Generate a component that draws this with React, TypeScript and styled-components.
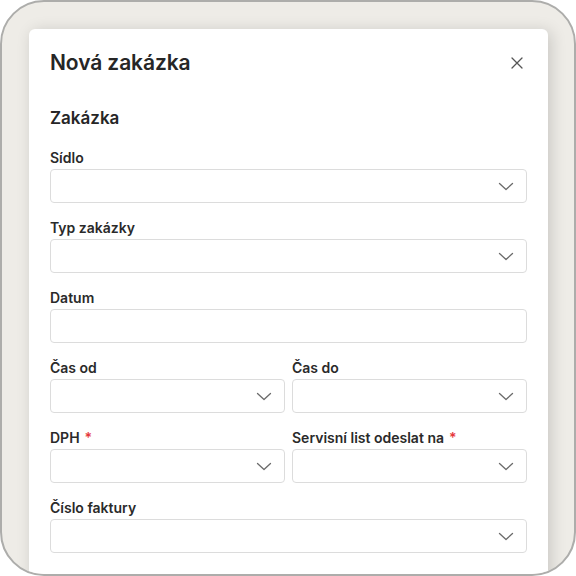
import styled, { createGlobalStyle } from 'styled-components';

const GlobalStyle = createGlobalStyle`
  html, body {
    margin: 0;
    padding: 0;
    background: #ffffff;
  }
  * {
    box-sizing: border-box;
  }
`;

const Frame = styled.div`
  width: 576px;
  height: 576px;
  border: 2px solid #adadab;
  border-radius: 44px;
  background: #eeece7;
  padding: 27px 26px 0 27px;
  overflow: hidden;
  font-family: Inter, 'Noto Sans', sans-serif;
  color: #262626;
`;

const Modal = styled.div`
  background: #ffffff;
  border-radius: 6px 6px 0 0;
  height: 600px;
  padding: 0 21px;
  box-shadow: 3px 2px 16px rgba(0, 0, 0, 0.16);
`;

const Header = styled.div`
  display: flex;
  align-items: center;
  justify-content: space-between;
  padding-top: 18px;
`;

const Title = styled.h1`
  margin: 0;
  font-size: 21px;
  line-height: 32px;
  font-weight: 600;
  letter-spacing: -0.1px;
`;

const CloseButton = styled.button`
  display: flex;
  align-items: center;
  justify-content: center;
  width: 24px;
  height: 24px;
  margin-right: -2px;
  padding: 0;
  border: none;
  background: none;
  cursor: pointer;
`;

const SectionTitle = styled.h2`
  margin: 26px 0 16px;
  font-size: 17px;
  line-height: 26px;
  font-weight: 600;
`;

const Form = styled.div`
  display: flex;
  flex-direction: column;
  gap: 14px;
`;

const Row = styled.div`
  display: grid;
  grid-template-columns: 1fr 1fr;
  gap: 7px;
`;

const Field = styled.div`
  display: flex;
  flex-direction: column;
  gap: 1px;
`;

const Label = styled.label`
  font-size: 14px;
  line-height: 21px;
  font-weight: 600;
  color: #2a2a2a;
`;

const Required = styled.span`
  color: #e5383b;
  margin-left: 5px;
`;

const Box = styled.div`
  height: 34px;
  border: 1px solid #dcdcdc;
  border-radius: 4px;
  background: #ffffff;
  display: flex;
  align-items: center;
  justify-content: flex-end;
  padding-right: 12px;
`;

const Chevron = () => (
  <svg width="16" height="9" viewBox="0 0 16 9" fill="none">
    <polyline points="1.5,1.5 8,7.5 14.5,1.5" stroke="#6b6b6b" strokeWidth="1.3" strokeLinecap="round" strokeLinejoin="round" />
  </svg>
);

const CloseIcon = () => (
  <svg width="12" height="12" viewBox="0 0 12 12" fill="none">
    <path d="M1 1 L11 11 M11 1 L1 11" stroke="#555" strokeWidth="1.3" strokeLinecap="round" />
  </svg>
);

type FieldProps = { label: string; required?: boolean; select?: boolean };

const FormField = ({ label, required, select = true }: FieldProps) => (
  <Field>
    <Label>
      {label}
      {required && <Required>*</Required>}
    </Label>
    <Box>{select && <Chevron />}</Box>
  </Field>
);

export default function App() {
  return (
    <>
      <GlobalStyle />
      <Frame>
        <Modal>
          <Header>
            <Title>Nová zakázka</Title>
            <CloseButton aria-label="Zavřít">
              <CloseIcon />
            </CloseButton>
          </Header>
          <SectionTitle>Zakázka</SectionTitle>
          <Form>
            <FormField label="Sídlo" />
            <FormField label="Typ zakázky" />
            <FormField label="Datum" select={false} />
            <Row>
              <FormField label="Čas od" />
              <FormField label="Čas do" />
            </Row>
            <Row>
              <FormField label="DPH" required />
              <FormField label="Servisní list odeslat na" required />
            </Row>
            <FormField label="Číslo faktury" />
          </Form>
        </Modal>
      </Frame>
    </>
  );
}
